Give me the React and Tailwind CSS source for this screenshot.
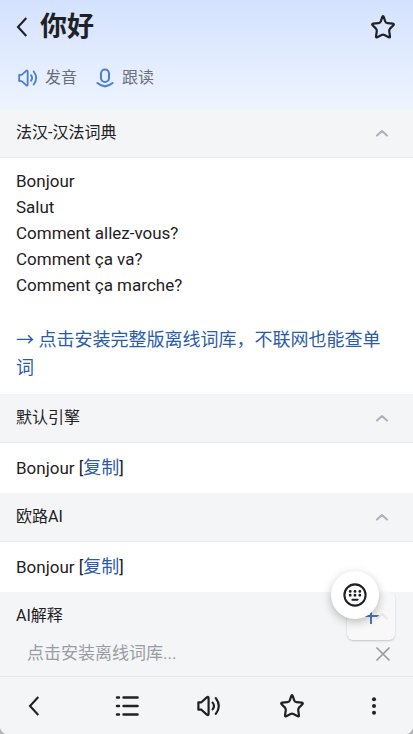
import { useState } from "react";

const stroke = {
  fill: "none",
  stroke: "currentColor",
  strokeLinecap: "round",
  strokeLinejoin: "round",
};

function BackIcon() {
  return (
    <svg viewBox="0 0 20 22" className="h-[22px] w-5" {...stroke} strokeWidth="2.1" strokeLinecap="butt" strokeLinejoin="miter">
      <path d="M14.3 2 6 11l8.3 9" />
    </svg>
  );
}

function StarIcon() {
  return (
    <svg viewBox="0 0 24 24" className="size-6" {...stroke} strokeWidth="2.2">
      <path d="M12 1.2Q12.5 1.2 12.8 2.2L14.2 6.4Q14.8 8 16.6 8.1L21.8 8.6Q23.4 9 22.4 10.2L19 13.6Q18 14.8 18.3 16.8L19 21.4Q19 22.8 17.8 22.2L13.4 20Q12 19.3 10.6 20L6.2 22.2Q5 22.8 5 21.4L5.7 16.8Q6 14.8 5 13.6L1.6 10.2Q.6 9 2.2 8.6L7.4 8.1Q9.2 8 9.8 6.4L11.2 2.2Q11.5 1.2 12 1.2Z" />
    </svg>
  );
}

function SpeakerIcon({ className }) {
  return (
    <svg viewBox="0 0 24 24" className={className} {...stroke} strokeWidth="2.2">
      <path d="M1.4 8.3h3L9.8 3.4q1.8-1.2 1.8.8v15.6q0 2-1.8.8L4.4 15.7h-3Z" />
      <path d="M15.6 8.6q2.8 3.4 0 6.8" />
      <path d="M18.8 4.2q6 7.8 0 15.6" />
    </svg>
  );
}

function MicIcon() {
  return (
    <svg viewBox="0 0 18 20" className="h-5 w-[18px] text-[#4d80d0]" {...stroke} strokeWidth="2.1">
      <rect x="5" y="1.5" width="8" height="12.5" rx="4" />
      <path d="M1.5 15q7.5 6.6 15 0" />
    </svg>
  );
}

function ChevronUp() {
  return (
    <svg viewBox="0 0 12 8" className="h-2 w-3" {...stroke} strokeWidth="2">
      <path d="M1 6.5 6 2l5 4.5" />
    </svg>
  );
}

function ListIcon() {
  return (
    <svg viewBox="0 0 24 20" className="h-5 w-6" {...stroke} strokeWidth="2.4">
      <path d="M2 1.5H4M2 10H4M2 18.5H4M8.5 1.5H22.6M8.5 10H22.6M8.5 18.5H22.6" />
    </svg>
  );
}

function KeyboardIcon() {
  return (
    <svg viewBox="0 0 24 24" className="size-6" {...stroke} strokeWidth="2.1">
      <circle cx="12" cy="12" r="10.6" />
      <path d="M9.5 16.8h5" />
      <path strokeWidth="2.9" d="M7.2 8.4h.01M12 8.4h.01M16.8 8.4h.01M7.2 12.3h.01M12 12.3h.01M16.8 12.3h.01" />
    </svg>
  );
}

function SectionHeader({ title, open, onToggle }) {
  return (
    <button
      type="button"
      aria-expanded={open}
      onClick={onToggle}
      className="box-content flex h-12 w-full items-center justify-between border-b border-[#e8eaec] bg-[#f4f5f7] text-left"
    >
      <span className="pl-4 text-base">{title}</span>
      <span className={open ? "mr-[25px] text-[#adb0b8]" : "mr-[25px] rotate-180 text-[#adb0b8]"}>
        <ChevronUp />
      </span>
    </button>
  );
}

function Section({ title, children }) {
  const [open, setOpen] = useState(true);

  return (
    <section>
      <SectionHeader title={title} open={open} onToggle={() => setOpen(!open)} />
      {open && children}
    </section>
  );
}

function Translation() {
  return (
    <p className="px-4 py-3 text-[17px] leading-[26px]">
      Bonjour [<a href="#copy" className="text-lg leading-[26px] text-[#2b5caa]">复制</a>]
    </p>
  );
}

const meanings = [
  "Bonjour",
  "Salut",
  "Comment allez-vous?",
  "Comment ça va?",
  "Comment ça marche?",
];

export default function App() {
  const [showTip, setShowTip] = useState(true);

  return (
    <div className="bg-[#b5b6b8]">
      <div className="flex min-h-screen flex-col overflow-hidden rounded-b-lg bg-white font-['Roboto','Noto_Sans_CJK_SC',sans-serif] text-[#1f2124]">
        <header className="bg-linear-to-b from-[#d4e2ff] to-[#eef4ff] pb-[19px]">
          <div className="flex h-[53px] items-center px-[18px]">
            <button type="button" aria-label="返回" className="-ml-1.5">
              <BackIcon />
            </button>
            <h1 className="ml-2 text-[27px] leading-10 font-bold">你好</h1>
            <button type="button" aria-label="收藏" className="ml-auto">
              <StarIcon />
            </button>
          </div>
          <div className="mt-3 flex h-[25px] items-center gap-[19px] pl-[18px] text-base text-[#6b6f78]">
            <button type="button" className="flex items-center gap-[7px]">
              <SpeakerIcon className="size-5 text-[#4d80d0]" />
              发音
            </button>
            <button type="button" className="flex items-center gap-2">
              <MicIcon />
              跟读
            </button>
          </div>
        </header>

        <main className="flex-1">
          <Section title="法汉-汉法词典">
            <div className="px-4 pt-[10px] pb-3">
              <ul className="text-[17px] leading-[26px]">
                {meanings.map((meaning) => (
                  <li key={meaning}>{meaning}</li>
                ))}
              </ul>
              <a href="#install" className="mt-7 block text-lg leading-7 text-[#2b5caa]">
                → 点击安装完整版离线词库，不联网也能查单词
              </a>
            </div>
          </Section>
          <Section title="默认引擎">
            <Translation />
          </Section>
          <Section title="欧路AI">
            <Translation />
          </Section>

          {/* AI explanation with the floating buttons over it */}
          <section className="relative bg-[#f4f5f7]">
            <div className="flex h-10 items-end pb-1 pl-4">
              <h2 className="text-base">AI解释</h2>
            </div>
            <button
              type="button"
              aria-label="添加"
              className="absolute top-0 right-[18px] flex size-12 items-center justify-center rounded-md bg-[#f8f8f9] text-[#4f77b8] shadow-[0_1px_2px_rgba(0,0,0,0.2)]"
            >
              <svg viewBox="0 0 16 16" className="size-4" {...stroke} strokeWidth="2" strokeLinecap="butt">
                <path d="M8 0v16M0 8h16" />
              </svg>
              <span className="absolute top-5 right-[7px] text-[#e8e8eb]">
                <ChevronUp />
              </span>
            </button>
            <button
              type="button"
              aria-label="键盘"
              className="absolute -top-[21px] right-[34px] flex size-12 items-center justify-center rounded-full bg-white shadow-[0_3px_10px_rgba(0,0,0,0.25)]"
            >
              <KeyboardIcon />
            </button>
            {showTip && (
              <div className="flex h-11 items-center justify-between pr-[23px] pl-[27px] text-[#999ca3]">
                <a href="#install" className="text-[17px]">点击安装离线词库...</a>
                <button type="button" aria-label="关闭" onClick={() => setShowTip(false)}>
                  <svg viewBox="0 0 14 14" className="size-[14px]" {...stroke} strokeWidth="1.7">
                    <path d="m1 1 12 12M13 1 1 13" />
                  </svg>
                </button>
              </div>
            )}
          </section>
        </main>

        <nav className="flex h-[58px] items-center justify-between border-t border-[#e5e7ea] bg-[#f4f5f7] pr-[27px] pl-6">
          <button type="button" aria-label="后退" className="w-8">
            <BackIcon />
          </button>
          <button type="button" aria-label="目录">
            <ListIcon />
          </button>
          <button type="button" aria-label="发音">
            <SpeakerIcon className="size-6" />
          </button>
          <button type="button" aria-label="收藏">
            <StarIcon />
          </button>
          <button type="button" aria-label="更多">
            <svg viewBox="0 0 24 24" className="size-6" fill="currentColor">
              <circle cx="12" cy="5.2" r="2" />
              <circle cx="12" cy="12" r="2" />
              <circle cx="12" cy="18.8" r="2" />
            </svg>
          </button>
        </nav>
      </div>
    </div>
  );
}
